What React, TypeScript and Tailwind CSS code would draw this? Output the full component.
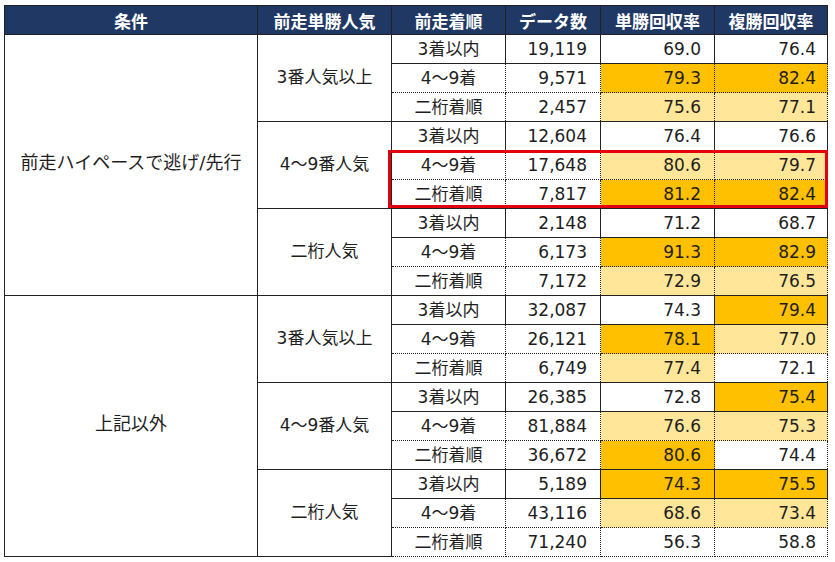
import React from 'react';

type Fill = '' | 'o' | 'l';
type Row = [string, string, string, Fill, string, Fill];

interface Group {
  cond: string;
  subs: { pop: string; rows: Row[] }[];
}

const groups: Group[] = [
  {
    cond: '前走ハイペースで逃げ/先行',
    subs: [
      {
        pop: '3番人気以上',
        rows: [
          ['3着以内', '19,119', '69.0', '', '76.4', ''],
          ['4～9着', '9,571', '79.3', 'o', '82.4', 'o'],
          ['二桁着順', '2,457', '75.6', 'l', '77.1', 'l'],
        ],
      },
      {
        pop: '4～9番人気',
        rows: [
          ['3着以内', '12,604', '76.4', '', '76.6', ''],
          ['4～9着', '17,648', '80.6', 'l', '79.7', 'l'],
          ['二桁着順', '7,817', '81.2', 'o', '82.4', 'o'],
        ],
      },
      {
        pop: '二桁人気',
        rows: [
          ['3着以内', '2,148', '71.2', '', '68.7', ''],
          ['4～9着', '6,173', '91.3', 'o', '82.9', 'o'],
          ['二桁着順', '7,172', '72.9', 'l', '76.5', 'l'],
        ],
      },
    ],
  },
  {
    cond: '上記以外',
    subs: [
      {
        pop: '3番人気以上',
        rows: [
          ['3着以内', '32,087', '74.3', '', '79.4', 'o'],
          ['4～9着', '26,121', '78.1', 'o', '77.0', 'l'],
          ['二桁着順', '6,749', '77.4', 'l', '72.1', ''],
        ],
      },
      {
        pop: '4～9番人気',
        rows: [
          ['3着以内', '26,385', '72.8', '', '75.4', 'o'],
          ['4～9着', '81,884', '76.6', 'l', '75.3', 'l'],
          ['二桁着順', '36,672', '80.6', 'o', '74.4', ''],
        ],
      },
      {
        pop: '二桁人気',
        rows: [
          ['3着以内', '5,189', '74.3', 'o', '75.5', 'o'],
          ['4～9着', '43,116', '68.6', 'l', '73.4', 'l'],
          ['二桁着順', '71,240', '56.3', '', '58.8', ''],
        ],
      },
    ],
  },
];

const fillClass = (f: Fill) =>
  f === 'o' ? 'bg-[#ffc000]' : f === 'l' ? 'bg-[#ffe699]' : 'bg-white';

export default function App() {
  return (
    <div
      className="w-[835px] h-[562px] bg-white pt-[5px] pl-[4px] text-[#1e1e1e]"
      style={{ fontFamily: '"DejaVu Sans", "Noto Sans CJK JP", sans-serif' }}
    >
      <div className="relative w-[823px]">
        <table className="table-fixed border-collapse w-[823px] text-[17px] leading-none">
          <colgroup>
            <col className="w-[253px]" />
            <col className="w-[134px]" />
            <col className="w-[114px]" />
            <col className="w-[95px]" />
            <col className="w-[114px]" />
            <col className="w-[113px]" />
          </colgroup>
          <thead>
            <tr
              className="h-[29px] bg-[#203864] text-white font-bold text-[17px]"
              style={{ fontFamily: '"Noto Sans CJK JP", sans-serif' }}
            >
              {['条件', '前走単勝人気', '前走着順', 'データ数', '単勝回収率', '複勝回収率'].map((h) => (
                <th key={h} className="border border-[#222] p-0 text-center">
                  {h}
                </th>
              ))}
            </tr>
          </thead>
          <tbody>
            {groups.map((g) =>
              g.subs.map((s, si) =>
                s.rows.map((r, ri) => {
                  const dotted = ri > 0 ? 'border-t border-t-[#222] border-dotted' : '';
                  return (
                    <tr key={g.cond + s.pop + ri} className="h-[29px]">
                      {si === 0 && ri === 0 && (
                        <td rowSpan={9} className="border border-[#222] p-0 text-center text-[18px]">
                          <span className="relative top-[-2px]">{g.cond}</span>
                        </td>
                      )}
                      {ri === 0 && (
                        <td rowSpan={3} className="border border-[#222] p-0 text-center">
                          <span className="relative top-[-1px]">{s.pop}</span>
                        </td>
                      )}
                      <td className={`border-x border-b border-[#222] p-0 text-center ${ri === 0 ? 'border-t' : ''} ${dotted}`}>
                        {r[0]}
                      </td>
                      <td className={`border-x border-b border-[#222] p-0 pr-[13px] text-right ${ri === 0 ? 'border-t' : ''} ${dotted}`}>
                        {r[1]}
                      </td>
                      <td className={`border-x border-b border-[#222] p-0 pr-[13px] text-right ${fillClass(r[3])} ${ri === 0 ? 'border-t' : ''} ${dotted}`}>
                        {r[2]}
                      </td>
                      <td className={`border-x border-b border-[#222] p-0 pr-[11px] text-right ${fillClass(r[5])} ${ri === 0 ? 'border-t' : ''} ${dotted}`}>
                        {r[4]}
                      </td>
                    </tr>
                  );
                })
              )
            )}
          </tbody>
        </table>
        <div className="absolute left-[384px] top-[145px] w-[440px] h-[58px] border-[3px] border-[#e3000f] pointer-events-none" />
      </div>
    </div>
  );
}
